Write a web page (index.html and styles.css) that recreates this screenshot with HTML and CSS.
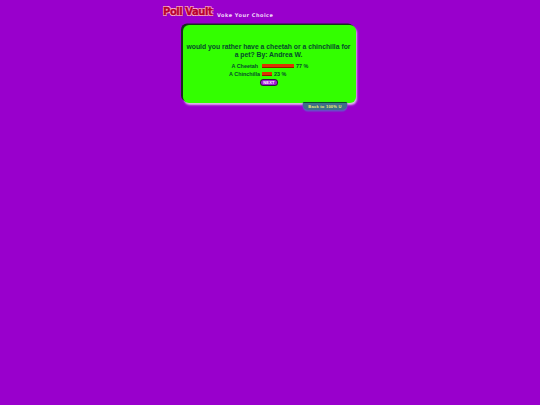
FILE: index.html
```html
<!DOCTYPE html>
<html>
<head>
<meta charset="utf-8">
<title>Poll Vault</title>
<link rel="stylesheet" href="styles.css">
</head>
<body>
<div class="page">
  <header class="brand">
    <span class="logo">Poll Vault</span>
    <span class="tagline">Voke Your Choice</span>
  </header>
  <main class="card">
    <h1 class="question">would you rather have a cheetah or a chinchilla for a pet? By: Andrea W.</h1>
    <div class="results">
      <div class="row">
        <span class="label label-first">A Cheetah</span>
        <span class="bar bar-a"></span>
        <span class="pct">77 %</span>
      </div>
      <div class="row">
        <span class="label">A Chinchilla</span>
        <span class="bar bar-b"></span>
        <span class="pct">23 %</span>
      </div>
    </div>
    <div class="next-wrap"><span class="next">NEXT</span></div>
    <span class="back">Back to 100% U</span>
  </main>
</div>
</body>
</html>
```
FILE: styles.css
```css
html, body {
  margin: 0;
  height: 100%;
  background: #9900cc;
}
.page {
  width: 540px;
  display: flex;
  flex-direction: column;
  font-family: "Liberation Sans", Arial, sans-serif;
}
.brand {
  height: 25px;
  padding-left: 163px;
  display: flex;
  align-items: flex-start;
  box-sizing: border-box;
}
.logo {
  margin-top: 6px;
  font: bold 10px/12px "DejaVu Sans", sans-serif;
  letter-spacing: -0.45px;
  color: #b80030;
  -webkit-text-stroke: 0.4px #b80030;
  text-shadow: -0.7px -0.7px 0 #ffb0d0, 0.7px -0.7px 0 #ffb0d0, -0.7px 0.7px 0 #ffb0d0, 0.7px 0.7px 0 #ffb0d0, 1.2px 1.2px 0 #660033;
  width: 54px;
  white-space: nowrap;
}
.tagline {
  margin-top: 12px;
  font: bold 5px/7px "DejaVu Sans", sans-serif;
  letter-spacing: 0.5px;
  color: #f0d8f8;
  white-space: nowrap;
}
.card {
  position: relative;
  margin-left: 183px;
  width: 173px;
  height: 78px;
  box-sizing: border-box;
  padding-top: 18px;
  background: #33ff00;
  border-radius: 6px;
  box-shadow: -2px -1.5px 0 #1c2a22, 1px 2px 2px #e0b8ec;
  color: #064a2c;
  text-align: center;
}
.question {
  margin: 0;
  padding: 0 3px 0 1px;
  font-size: 6.8px;
  line-height: 8px;
  font-weight: bold;
}
.results {
  margin-top: 4px;
  display: flex;
  flex-direction: column;
  gap: 3px;
  font-size: 5.4px;
  font-weight: bold;
}
.row {
  display: flex;
  align-items: center;
  height: 5px;
}
.label {
  width: 79px;
  padding-right: 2px;
  box-sizing: border-box;
  text-align: right;
  white-space: nowrap;
}
.label-first {
  padding-right: 4px;
}
.bar {
  height: 4px;
  margin-right: 2px;
  background: #dd3300;
  border-bottom: 1px solid #991100;
  box-sizing: border-box;
}
.bar-a { width: 32px; }
.bar-b { width: 10px; }
.pct { white-space: nowrap; }
.next-wrap {
  margin-top: 4px;
  display: flex;
  justify-content: center;
}
.next {
  width: 16px;
  height: 5px;
  margin-right: 1px;
  border-radius: 3px;
  background: #a020d8;
  box-shadow: 0 0 0 1px #30183c;
  color: #fff;
  font-size: 4px;
  line-height: 5px;
  font-weight: bold;
  letter-spacing: 0.2px;
}
.back {
  position: absolute;
  left: 120px;
  top: 77px;
  width: 44px;
  height: 7px;
  border-radius: 1px 1px 5px 5px;
  background: #3d6f8a;
  border-top: 1px solid #124030;
  color: #f0f070;
  font-size: 4px;
  line-height: 7px;
  font-weight: bold;
  letter-spacing: 0.25px;
  white-space: nowrap;
  box-shadow: 0 1px 1px 0.5px #6650c8;
}
```
